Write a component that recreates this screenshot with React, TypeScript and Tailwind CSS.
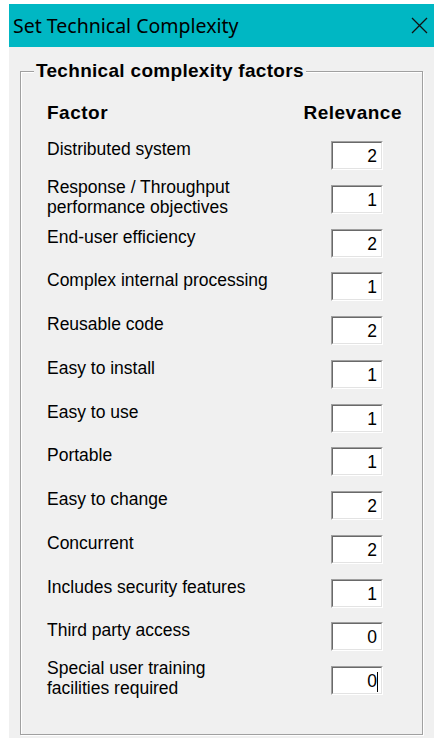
import React from "react";

type Factor = { label: string[]; value: string; caret?: boolean };

const factors: Factor[] = [
  { label: ["Distributed system"], value: "2" },
  { label: ["Response / Throughput", "performance objectives"], value: "1" },
  { label: ["End-user efficiency"], value: "2" },
  { label: ["Complex internal processing"], value: "1" },
  { label: ["Reusable code"], value: "2" },
  { label: ["Easy to install"], value: "1" },
  { label: ["Easy to use"], value: "1" },
  { label: ["Portable"], value: "1" },
  { label: ["Easy to change"], value: "2" },
  { label: ["Concurrent"], value: "2" },
  { label: ["Includes security features"], value: "1" },
  { label: ["Third party access"], value: "0" },
  { label: ["Special user training", "facilities required"], value: "0", caret: true },
];

function ValueBox({ value, caret }: { value: string; caret?: boolean }) {
  return (
    <div className="relative h-[29px] w-[52px] border-t border-l border-t-[#a0a0a0] border-l-[#a0a0a0] border-r border-b border-r-white border-b-white">
      <div className="h-full w-full border-t border-l border-t-[#696969] border-l-[#696969] border-r border-b border-r-[#e3e3e3] border-b-[#e3e3e3] bg-white pr-[4px] text-right text-[17.5px] leading-[26px] text-black">
        {value}
      </div>
      {caret && <span className="absolute left-[45px] top-[5px] h-[20px] w-[1px] bg-black" />}
    </div>
  );
}

export default function App() {
  return (
    <div className="h-[738px] w-[434px] bg-white pl-[9px] pt-[4px]" style={{ fontFamily: '"Liberation Sans", Arial, sans-serif' }}>
      <div className="flex h-[734px] w-[425px] flex-col bg-[#f0f0f0]">
        {/* caption */}
        <div className="flex h-[43px] items-center justify-between bg-[#00b7c3] pl-[4px] pr-[6px]">
          <span className="text-[19.5px] text-black" style={{ fontFamily: '"Noto Sans", "Open Sans", sans-serif' }}>
            Set Technical Complexity
          </span>
          <svg width="17" height="17" viewBox="0 0 17 17">
            <path d="M1 1 L16 16 M16 1 L1 16" stroke="#111" strokeWidth="1.3" fill="none" />
          </svg>
        </div>

        {/* group box */}
        <div className="relative ml-[11px] mt-[24px] h-[664px] w-[403px] border border-[#a0a0a0] shadow-[inset_1px_1px_0_#fff,1px_1px_0_#fff]">
          <div className="absolute left-[13px] top-[-11px] bg-[#f0f0f0] px-[2px] text-[19px] font-bold leading-[20px] tracking-[0.3px] text-black">
            Technical complexity factors
          </div>

          <div className="flex flex-col pl-[26px] pr-[16px] pt-[31px]">
            <div className="flex h-[20px] justify-between text-[19px] font-bold leading-[20px] tracking-[0.5px] text-black">
              <span>Factor</span>
              <span className="mr-[4px]">Relevance</span>
            </div>

            <div className="mt-[18px] flex flex-col">
              {factors.map((f) => (
                <div key={f.label.join(" ")} className="flex h-[43.75px] items-start justify-between pr-[23px]">
                  <div
                    className={`text-[17.5px] leading-[20px] text-black ${f.label.length > 1 ? "-mt-[8px]" : "-mt-[2px]"}`}
                  >
                    {f.label.map((l) => (
                      <div key={l}>{l}</div>
                    ))}
                  </div>
                  <ValueBox value={f.value} caret={f.caret} />
                </div>
              ))}
            </div>
          </div>
        </div>
      </div>
    </div>
  );
}
